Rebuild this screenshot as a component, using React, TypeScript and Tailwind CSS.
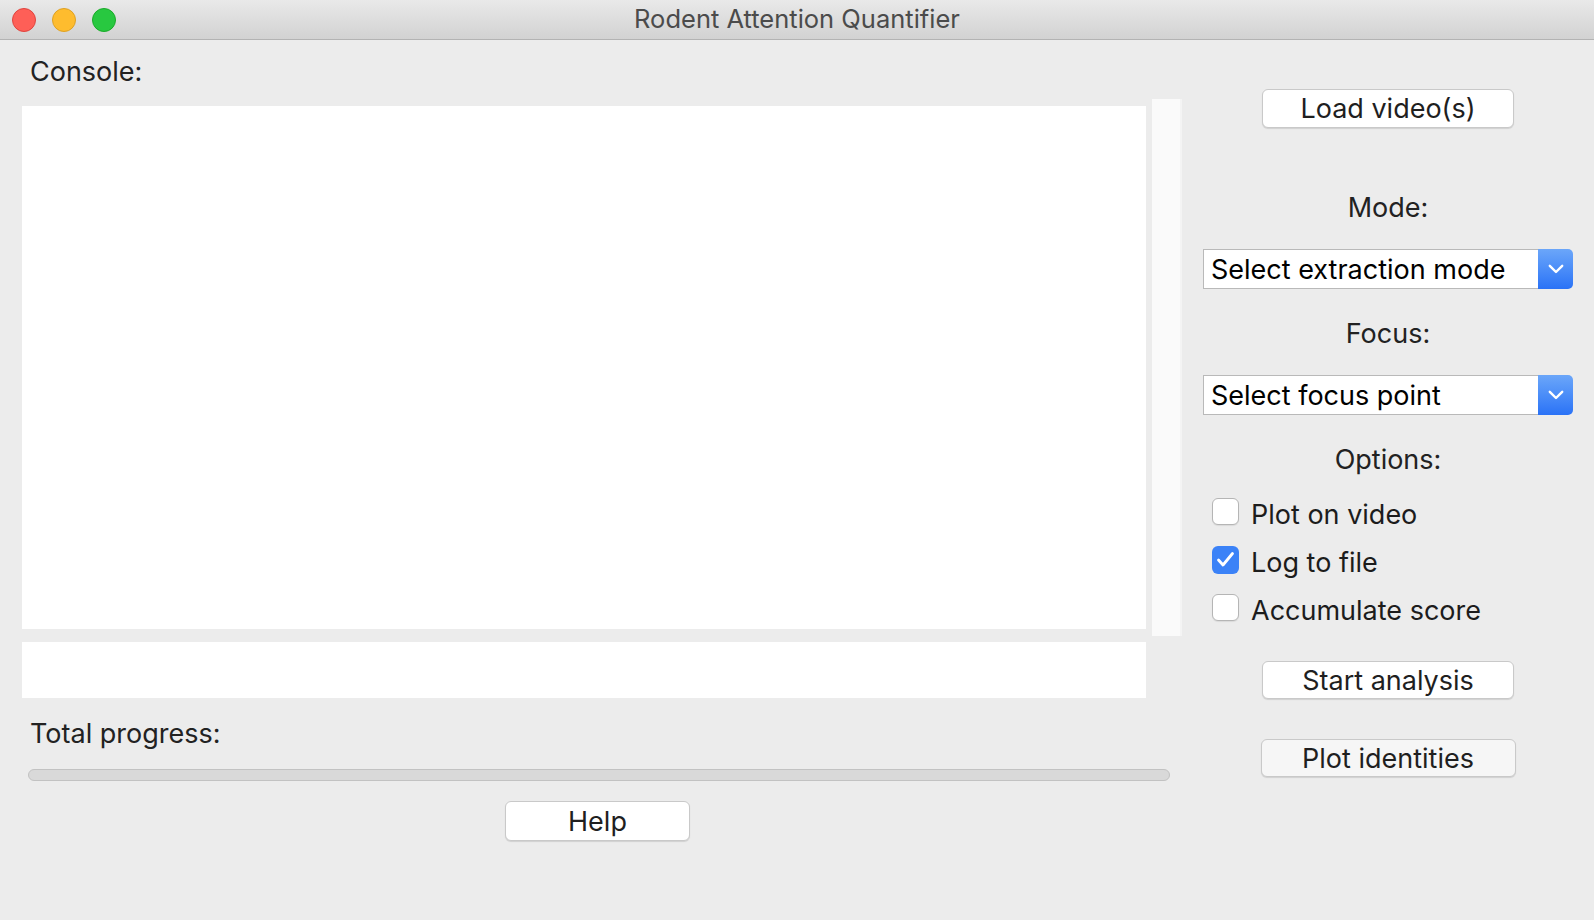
const font = { fontFamily: 'Inter, "Noto Sans", sans-serif' };

function MacButton({ label, className = '' }: { label: string; className?: string }) {
  return (
    <button
      className={`flex items-center justify-center rounded-[6px] border border-[#c9c9c9] bg-white text-[27px] leading-none text-[#1f1f1f] shadow-[0_1px_1px_rgba(0,0,0,0.12)] ${className}`}
    >
      {label}
    </button>
  );
}

function Dropdown({ label }: { label: string }) {
  return (
    <div className="flex h-[40px] w-[370px] items-stretch">
      <div className="flex flex-1 items-center border border-r-0 border-[#b9b9b9] bg-white pl-[7px] text-[27px] leading-none text-black">
        {label}
      </div>
      <div className="flex w-[35px] items-center justify-center rounded-r-[5px] bg-gradient-to-b from-[#6ba6f9] to-[#2a72f6]">
        <svg width="16" height="10" viewBox="0 0 16 10" fill="none">
          <path d="M1.8 1.8 L8 8 L14.2 1.8" stroke="white" strokeWidth="2.4" strokeLinecap="round" strokeLinejoin="round" />
        </svg>
      </div>
    </div>
  );
}

function Option({ label, checked }: { label: string; checked?: boolean }) {
  return (
    <div className="flex h-[27px] items-center gap-[12px]">
      {checked ? (
        <div className="flex h-[28px] w-[27px] items-center justify-center rounded-[6px] bg-[#3b82f7]">
          <svg width="19" height="17" viewBox="0 0 19 17" fill="none">
            <path d="M2.5 9 L7 14 L16.5 2.5" stroke="white" strokeWidth="2.8" strokeLinecap="round" strokeLinejoin="round" />
          </svg>
        </div>
      ) : (
        <div className="h-[27px] w-[27px] rounded-[6px] border border-[#b5b5b5] bg-white shadow-[0_1px_1px_rgba(0,0,0,0.08)]" />
      )}
      <span className="pt-[6px] text-[27px] leading-none text-[#1c1c1c]">{label}</span>
    </div>
  );
}

export default function App() {
  return (
    <div className="h-[920px] w-[1594px] overflow-hidden bg-[#ececec]" style={font}>
      {/* title bar */}
      <div className="relative flex h-[40px] items-center border-b border-[#b3b3b3] bg-gradient-to-b from-[#e9e9e9] to-[#d2d2d2]">
        <div className="flex gap-[16px] pl-[12px]">
          <div className="h-[24px] w-[24px] rounded-full border border-[#e0443e] bg-[#fe5f57]" />
          <div className="h-[24px] w-[24px] rounded-full border border-[#dea123] bg-[#febc2e]" />
          <div className="h-[24px] w-[24px] rounded-full border border-[#1aab29] bg-[#28c840]" />
        </div>
        <div className="absolute inset-0 flex items-center justify-center text-[25.5px] text-[#4b4b4b]">
          Rodent Attention Quantifier
        </div>
      </div>

      <div className="flex">
        {/* left */}
        <div className="flex w-[1182px] flex-col pl-[22px]">
          <div className="ml-[8px] h-[59px] pt-[15px] text-[27px] leading-[34px] text-[#222]">Console:</div>
          <div className="flex items-start">
            <div className="mt-[7px] h-[523px] w-[1124px] bg-white" />
            <div className="ml-[6px] h-[537px] w-[30px] border-r-[2px] border-[#f4f4f4] bg-[#fafafa]" />
          </div>
          <div className="mt-[6px] h-[56px] w-[1124px] bg-white" />
          <div className="ml-[8px] mt-[19px] text-[27px] leading-[34px] text-[#222]">Total progress:</div>
          <div className="ml-[6px] mt-[18px] h-[12px] w-[1142px] rounded-full border border-[#c2c2c2] bg-[#d9d9d9]" />
          <MacButton label="Help" className="ml-[483px] mt-[20px] h-[40px] w-[185px]" />
        </div>

        {/* right */}
        <div className="flex flex-1 flex-col items-center">
          <MacButton label="Load video(s)" className="mt-[49px] h-[39px] w-[252px]" />
          <div className="mt-[63px] text-[27px] leading-[34px] text-[#222]">Mode:</div>
          <div className="mt-[24px]">
            <Dropdown label="Select extraction mode" />
          </div>
          <div className="mt-[28px] text-[27px] leading-[34px] text-[#222]">Focus:</div>
          <div className="mt-[24px]">
            <Dropdown label="Select focus point" />
          </div>
          <div className="mt-[28px] text-[27px] leading-[34px] text-[#222]">Options:</div>
          <div className="mt-[21px] flex flex-col gap-[21px] self-start pl-[30px]">
            <Option label="Plot on video" />
            <Option label="Log to file" checked />
            <Option label="Accumulate score" />
          </div>
          <MacButton label="Start analysis" className="mt-[40px] h-[38px] w-[252px]" />
          <MacButton label="Plot identities" className="mt-[40px] h-[38px] w-[255px] !bg-[#f6f6f6]" />
        </div>
      </div>
    </div>
  );
}
